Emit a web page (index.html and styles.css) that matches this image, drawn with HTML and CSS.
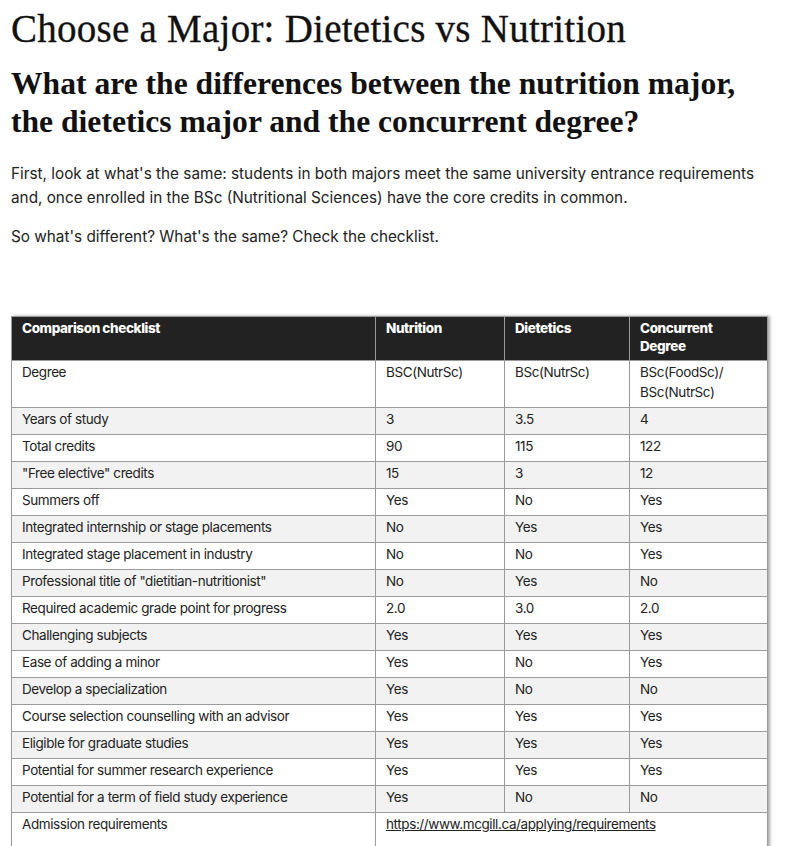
FILE: index.html
```html
<!DOCTYPE html>
<html lang="en">
<head>
<meta charset="utf-8">
<title>Choose a Major: Dietetics vs Nutrition</title>
<link rel="stylesheet" href="styles.css">
</head>
<body>
<main class="page">
  <h1 class="title">Choose a Major: Dietetics vs Nutrition</h1>
  <h2 class="subtitle">What are the differences between the nutrition major, the dietetics major and the concurrent degree?</h2>
  <p class="text">First, look at what's the same: students in both majors meet the same university entrance requirements and, once enrolled in the BSc (Nutritional Sciences) have the core credits in common.</p>
  <p class="text">So what's different? What's the same? Check the checklist.</p>
  <table class="checklist">
    <colgroup>
      <col class="c1"><col class="c2"><col class="c3"><col class="c4">
    </colgroup>
    <thead>
      <tr><th>Comparison checklist</th><th>Nutrition</th><th>Dietetics</th><th>Concurrent Degree</th></tr>
    </thead>
    <tbody>
      <tr><td>Degree</td><td>BSC(NutrSc)</td><td>BSc(NutrSc)</td><td>BSc(FoodSc)/ BSc(NutrSc)</td></tr>
      <tr><td>Years of study</td><td>3</td><td>3.5</td><td>4</td></tr>
      <tr><td>Total credits</td><td>90</td><td>115</td><td>122</td></tr>
      <tr><td>"Free elective" credits</td><td>15</td><td>3</td><td>12</td></tr>
      <tr><td>Summers off</td><td>Yes</td><td>No</td><td>Yes</td></tr>
      <tr><td>Integrated internship or stage placements</td><td>No</td><td>Yes</td><td>Yes</td></tr>
      <tr><td>Integrated stage placement in industry</td><td>No</td><td>No</td><td>Yes</td></tr>
      <tr><td>Professional title of "dietitian-nutritionist"</td><td>No</td><td>Yes</td><td>No</td></tr>
      <tr><td>Required academic grade point for progress</td><td>2.0</td><td>3.0</td><td>2.0</td></tr>
      <tr><td>Challenging subjects</td><td>Yes</td><td>Yes</td><td>Yes</td></tr>
      <tr><td>Ease of adding a minor</td><td>Yes</td><td>No</td><td>Yes</td></tr>
      <tr><td>Develop a specialization</td><td>Yes</td><td>No</td><td>No</td></tr>
      <tr><td>Course selection counselling with an advisor</td><td>Yes</td><td>Yes</td><td>Yes</td></tr>
      <tr><td>Eligible for graduate studies</td><td>Yes</td><td>Yes</td><td>Yes</td></tr>
      <tr><td>Potential for summer research experience</td><td>Yes</td><td>Yes</td><td>Yes</td></tr>
      <tr><td>Potential for a term of field study experience</td><td>Yes</td><td>No</td><td>No</td></tr>
      <tr><td>Admission requirements</td><td colspan="3"><a class="link" href="#">https://www.mcgill.ca/applying/requirements</a><br>&nbsp;</td></tr>
    </tbody>
  </table>
</main>
</body>
</html>
```

FILE: styles.css
```css
html, body {
  margin: 0;
  padding: 0;
  background: #ffffff;
}

.page {
  padding: 7px 11px 0 11px;
  color: #222222;
  font-family: Inter, "Liberation Sans", Arial, sans-serif;
}

.title {
  font-family: "Liberation Serif", "Times New Roman", serif;
  font-weight: normal;
  font-size: 39px;
  line-height: 44px;
  letter-spacing: 0.25px;
  margin: 0 0 14px 0;
  color: #111111;
  -webkit-text-stroke: 0.3px #111111;
}

.subtitle {
  font-family: "Liberation Serif", "Times New Roman", serif;
  font-weight: bold;
  font-size: 31.6px;
  line-height: 38px;
  margin: 0 0 21px 0;
  color: #111111;
}

.text {
  font-size: 15.3px;
  line-height: 24px;
  margin: 0 0 15px 0;
}

.checklist {
  margin-top: 67px;
  width: 756px;
  border-collapse: collapse;
  table-layout: fixed;
  font-size: 13.5px;
  letter-spacing: -0.4px;
  box-shadow: 2px 0 3px rgba(0,0,0,0.35);
}

.c1 { width: 364px; }
.c2 { width: 129px; }
.c3 { width: 125px; }
.c4 { width: 138px; }

.checklist th {
  background: #222222;
  color: #ffffff;
  text-align: left;
  vertical-align: top;
  font-weight: 800;
  line-height: 18px;
  padding: 2px 10px 5px 10px;
  border: 1px solid #9a9a9a;
}

.checklist td {
  text-align: left;
  vertical-align: top;
  line-height: 20px;
  padding: 1px 10px 5px 10px;
  border: 1px solid #9a9a9a;
  color: #222222;
}

.checklist tbody tr:nth-child(even) td {
  background: #f2f2f2;
}

.link {
  color: #222222;
  text-decoration: underline;
}
```
